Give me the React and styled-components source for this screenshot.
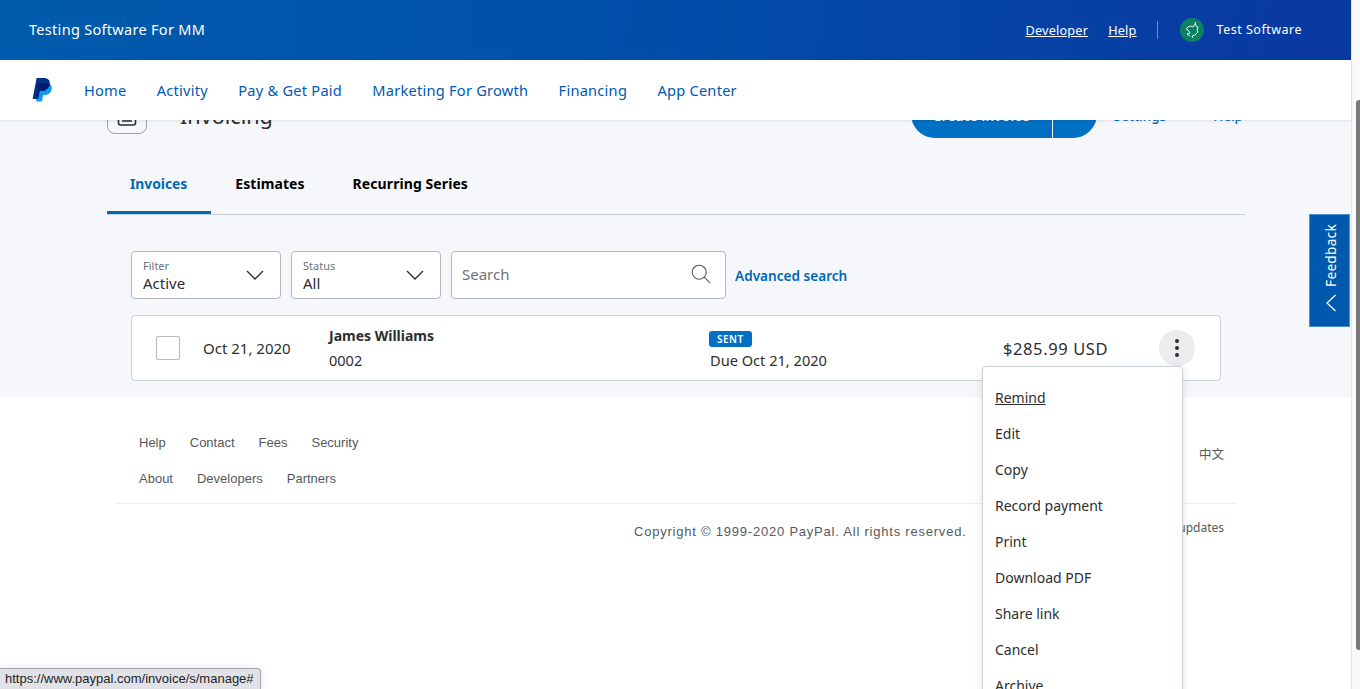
import React from 'react';
import styled, { createGlobalStyle } from 'styled-components';

const GlobalStyle = createGlobalStyle`
  html, body {
    margin: 0;
    padding: 0;
    height: 100%;
    overflow: hidden;
    background: #fff;
  }
  * {
    box-sizing: border-box;
  }
  a {
    text-decoration: none;
  }
`;

const NAV_LINKS = ['Home', 'Activity', 'Pay & Get Paid', 'Marketing For Growth', 'Financing', 'App Center'];
const TABS = ['Invoices', 'Estimates', 'Recurring Series'];
const MENU_ITEMS = ['Remind', 'Edit', 'Copy', 'Record payment', 'Print', 'Download PDF', 'Share link', 'Cancel', 'Archive'];
const FOOTER_ROWS = [
  ['Help', 'Contact', 'Fees', 'Security'],
  ['About', 'Developers', 'Partners'],
];

const Chevron = () => (
  <svg width="18" height="10" viewBox="0 0 18 10" fill="none" stroke="#2c2e2f" strokeWidth="1.3">
    <path d="M1 1l8 8 8-8" />
  </svg>
);

const PayPalLogo = () => (
  <svg width="20" height="24" viewBox="0 0 20 24">
    <path fill="#0a9cee" d="M6.4 5H14c3.6 0 6.4 2.2 5.7 6-.7 3.7-3.3 6-7 6h-1.6l-1.2 6.4H4.2z" />
    <path fill="#003087" d="M4.6 0h7.2c4.4 0 6.6 2.4 5.9 6.2-.8 4-3.8 6.6-7.8 6.6H7.6L6.1 21H.6z" />
    <path fill="#001f6b" d="M6.2 5.2H14c1.5 0 2.8.4 3.8 1-.9 4-3.9 6.6-7.9 6.6H7.6L6.5 19H5z" />
  </svg>
);

const LeafMark = () => (
  <svg width="14" height="18" viewBox="0 0 14 18" fill="none" stroke="#fff" strokeWidth="0.9" strokeLinejoin="round">
    <path d="M10 1l1 4 2 1-1 3 1 2-3 3-3 1 1 2" />
    <path d="M5 15l-3-2 3-1-2-3-2-1 2-2 3-1 2 1 2-3" />
  </svg>
);

export default function App() {
  return (
    <Screen>
      <GlobalStyle />
      <Page>
        <TopBar>
          <AccountName>Testing Software For MM</AccountName>
          <TopActions>
            <TopLink href="#">Developer</TopLink>
            <TopLink href="#">Help</TopLink>
            <TopDivider />
            <Avatar><LeafMark /></Avatar>
            <UserName>Test Software</UserName>
          </TopActions>
        </TopBar>

        <NavBar>
          <PayPalLogo />
          <NavLinks>
            {NAV_LINKS.map((link) => <NavLink key={link} href="#">{link}</NavLink>)}
          </NavLinks>
        </NavBar>

        <Main>
          <Hero>
            <HeroIcon>
              <svg width="20" height="24" viewBox="0 0 20 24" fill="none" stroke="#2c2e2f" strokeWidth="1.6">
                <rect x="1.5" y="1" width="17" height="22" rx="2" />
                <path d="M5 14h10M5 19h10" />
              </svg>
            </HeroIcon>
            <HeroTitle>Invoicing</HeroTitle>
            <HeroActions>
              <SplitButton>
                <CreateButton>Create invoice</CreateButton>
                <CaretButton />
              </SplitButton>
              <HeroLink href="#">Settings</HeroLink>
              <HeroLink href="#">Help</HeroLink>
            </HeroActions>
          </Hero>

          <Tabs>
            {TABS.map((tab, i) => <Tab key={tab} $active={i === 0}>{tab}</Tab>)}
          </Tabs>

          <Content>
            <Filters>
              <SelectBox>
                <SelectText>
                  <SelectLabel>Filter</SelectLabel>
                  <SelectValue>Active</SelectValue>
                </SelectText>
                <Chevron />
              </SelectBox>
              <SelectBox>
                <SelectText>
                  <SelectLabel>Status</SelectLabel>
                  <SelectValue>All</SelectValue>
                </SelectText>
                <Chevron />
              </SelectBox>
              <SearchBox>
                <SearchPlaceholder>Search</SearchPlaceholder>
                <svg width="20" height="20" viewBox="0 0 20 20" fill="none" stroke="#55595c" strokeWidth="1.1">
                  <circle cx="8.2" cy="8.2" r="7" />
                  <path d="M13.2 13.2l6 6" />
                </svg>
              </SearchBox>
              <AdvancedLink href="#">Advanced search</AdvancedLink>
            </Filters>

            <InvoiceCard>
              <Checkbox />
              <DateCell>Oct 21, 2020</DateCell>
              <Customer>
                <CustomerName>James Williams</CustomerName>
                <InvoiceNo>0002</InvoiceNo>
              </Customer>
              <StatusCell>
                <Badge>SENT</Badge>
                <DueDate>Due Oct 21, 2020</DueDate>
              </StatusCell>
              <Amount>$285.99 USD</Amount>
              <KebabCell>
                <KebabButton>
                  <Dot /><Dot /><Dot />
                </KebabButton>
                <Menu>
                  {MENU_ITEMS.map((item, i) => <MenuItem key={item} $hover={i === 0}>{item}</MenuItem>)}
                </Menu>
              </KebabCell>
            </InvoiceCard>
          </Content>
        </Main>

        <Footer>
          <FooterTop>
            <FooterLinks>
              {FOOTER_ROWS.map((row) => (
                <FooterRow key={row[0]}>
                  {row.map((link) => <FooterLink key={link} href="#">{link}</FooterLink>)}
                </FooterRow>
              ))}
            </FooterLinks>
            <Language>中文</Language>
          </FooterTop>
          <FooterLegal>
            <Copyright>Copyright © 1999-2020 PayPal. All rights reserved.</Copyright>
            <PolicyLink>Policy updates</PolicyLink>
          </FooterLegal>
        </Footer>

        <FeedbackTab>
          <FeedbackLabel>Feedback</FeedbackLabel>
          <svg width="10" height="18" viewBox="0 0 10 18" fill="none" stroke="#fff" strokeWidth="1.2">
            <path d="M9.5 1L1 9l8.5 8" />
          </svg>
        </FeedbackTab>

        <StatusTip>https://www.paypal.com/invoice/s/manage#</StatusTip>
      </Page>

      <ScrollTrack>
        <ScrollThumb />
      </ScrollTrack>
    </Screen>
  );
}

const Screen = styled.div`
  display: flex;
  width: 1360px;
  height: 689px;
  overflow: hidden;
  font-family: 'Noto Sans', 'Open Sans', sans-serif;
  color: #2c2e2f;
`;

const Page = styled.div`
  position: relative;
  width: 1351px;
  flex: none;
`;

const TopBar = styled.header`
  display: flex;
  align-items: center;
  justify-content: space-between;
  height: 60px;
  padding: 0 49px 0 29px;
  background: linear-gradient(95deg, #005bac 0%, #004fa9 45%, #0a38a1 100%);
  color: #fff;
`;

const AccountName = styled.div`
  margin-top: -2px;
  font-size: 14.5px;
  letter-spacing: 0.3px;
`;

const TopActions = styled.div`
  display: flex;
  align-items: center;
`;

const TopLink = styled.a`
  margin-right: 20px;
  font-size: 12.7px;
  color: #fff;
  text-decoration: underline;
  letter-spacing: 0.2px;
`;

const TopDivider = styled.span`
  width: 1px;
  height: 18px;
  margin: 0 22px 0 0;
  background: rgba(255, 255, 255, 0.4);
`;

const Avatar = styled.span`
  display: flex;
  align-items: center;
  justify-content: center;
  width: 24px;
  height: 24px;
  margin-right: 13px;
  border-radius: 50%;
  background: #0b8062;
`;

const UserName = styled.span`
  margin-top: -2px;
  font-size: 12.5px;
  letter-spacing: 0.5px;
`;

const NavBar = styled.nav`
  position: relative;
  z-index: 2;
  display: flex;
  align-items: center;
  gap: 32px;
  height: 60px;
  padding-left: 32px;
  background: #fff;
  box-shadow: 0 1px 3px rgba(0, 0, 0, 0.1);
`;

const NavLinks = styled.div`
  display: flex;
  gap: 30.3px;
`;

const NavLink = styled.a`
  font-size: 14.6px;
  letter-spacing: 0.24px;
  color: #0059b2;
`;

const Main = styled.main`
  display: flow-root;
  height: 277px;
  padding: 0 106px 0 107px;
  background: #f5f7fa;
`;

const Hero = styled.div`
  display: flex;
  align-items: center;
  height: 48px;
  margin-top: -30px;
`;

const HeroIcon = styled.div`
  display: flex;
  align-items: center;
  justify-content: center;
  width: 40px;
  height: 40px;
  border: 1px solid #9da3a6;
  border-radius: 8px;
`;

const HeroTitle = styled.h1`
  margin: 3px 0 0 33px;
  font-size: 21.6px;
  font-weight: 400;
`;

const HeroActions = styled.div`
  display: flex;
  align-items: center;
  margin-left: auto;
  margin-right: 2px;
`;

const SplitButton = styled.div`
  display: flex;
  height: 48px;
  margin-right: 17px;
  border-radius: 24px;
  overflow: hidden;
`;

const CreateButton = styled.button`
  width: 142px;
  padding-top: 3px;
  border: 0;
  border-right: 1px solid #fff;
  background: #0070c4;
  color: #fff;
  font: 600 14px 'Noto Sans', sans-serif;
`;

const CaretButton = styled.button`
  width: 44px;
  border: 0;
  background: #0070c4;
`;

const HeroLink = styled.a`
  margin: 3px 47px 0 0;
  font-size: 13.5px;
  font-weight: 500;
  color: #0070c4;

  &:last-child {
    margin-right: 0;
  }
`;

const Tabs = styled.div`
  display: flex;
  height: 61px;
  margin-top: 16px;
  border-bottom: 1px solid #c5d0d6;
`;

const Tab = styled.div`
  display: flex;
  align-items: center;
  height: 60px;
  padding: 2px 24px 0 ${(p) => (p.$active ? '23px' : '24px')};
  border-bottom: 3px solid ${(p) => (p.$active ? '#0068b8' : 'transparent')};
  font-size: ${(p) => (p.$active ? '13.8px' : '14px')};
  font-weight: 700;
  letter-spacing: ${(p) => (p.$active ? '0' : '0.08px')};
  color: ${(p) => (p.$active ? '#0068b8' : '#000')};
`;

const Content = styled.div`
  padding: 36px 24px 0;
`;

const Filters = styled.div`
  display: flex;
  align-items: center;
  gap: 10px;
  height: 48px;
`;

const SelectBox = styled.div`
  display: flex;
  align-items: center;
  justify-content: space-between;
  width: 150px;
  height: 48px;
  padding: 0 16px 0 11px;
  background: #fff;
  border: 1px solid #b4b8bb;
  border-radius: 4px;
`;

const SelectText = styled.div`
  display: flex;
  flex-direction: column;
`;

const SelectLabel = styled.span`
  font-size: 11px;
  line-height: 15px;
  color: #6c7378;
`;

const SelectValue = styled.span`
  margin-top: 1px;
  font-size: 15px;
  line-height: 19px;
`;

const SearchBox = styled.div`
  display: flex;
  align-items: center;
  justify-content: space-between;
  width: 275px;
  height: 48px;
  padding: 0 14px 2px 10px;
  background: #fff;
  border: 1px solid #b4b8bb;
  border-radius: 4px;
`;

const SearchPlaceholder = styled.span`
  font-size: 15px;
  color: #6c7378;
`;

const AdvancedLink = styled.a`
  margin-left: -1px;
  font-size: 13.6px;
  font-weight: 600;
  color: #0068b8;
`;

const InvoiceCard = styled.div`
  display: grid;
  grid-template-columns: 47px 126px 380px 294px 156px 36px;
  align-items: center;
  height: 66px;
  margin-top: 16px;
  padding-left: 24px;
  background: #fff;
  border: 1px solid #cbd2d6;
  border-radius: 4px;
`;

const Checkbox = styled.span`
  width: 24px;
  height: 24px;
  background: #fff;
  border: 1px solid #b4b8bb;
  border-radius: 2px;
`;

const DateCell = styled.span`
  font-size: 15px;
`;

const Customer = styled.div`
  display: flex;
  flex-direction: column;
  gap: 6px;
`;

const CustomerName = styled.span`
  font-size: 14px;
  line-height: 19px;
  font-weight: 700;
`;

const InvoiceNo = styled.span`
  font-size: 14.5px;
  line-height: 19px;
`;

const StatusCell = styled.div`
  display: flex;
  flex-direction: column;
  align-items: flex-start;
  gap: 3px;
  padding-top: 5px;
`;

const Badge = styled.span`
  padding: 0 8px;
  height: 16px;
  line-height: 16px;
  background: #0070c4;
  border-radius: 3px;
  color: #fff;
  font-size: 10px;
  font-weight: 600;
  letter-spacing: 0.5px;
`;

const DueDate = styled.span`
  padding-left: 1px;
  font-size: 14.6px;
  line-height: 20px;
`;

const Amount = styled.span`
  font-size: 16.5px;
  letter-spacing: 0.6px;
`;

const KebabCell = styled.div`
  position: relative;
  height: 36px;
`;

const KebabButton = styled.div`
  display: flex;
  flex-direction: column;
  align-items: center;
  justify-content: center;
  gap: 3px;
  width: 36px;
  height: 36px;
  border-radius: 50%;
  background: #eaeced;
`;

const Dot = styled.span`
  width: 4px;
  height: 4px;
  border-radius: 50%;
  background: #2c2e2f;
`;

const Menu = styled.ul`
  position: absolute;
  top: 36px;
  right: 12px;
  z-index: 3;
  width: 201px;
  margin: 0;
  padding: 13px 0 0;
  list-style: none;
  background: #fff;
  border: 1px solid #cbd2d6;
  border-radius: 4px;
  box-shadow: 0 2px 8px rgba(0, 0, 0, 0.12);
`;

const MenuItem = styled.li`
  height: 36px;
  padding-left: 12px;
  line-height: 36px;
  font-size: 14px;
  text-decoration: ${(p) => (p.$hover ? 'underline' : 'none')};
`;

const Footer = styled.footer`
  margin: 0 114px 0 115px;
  padding-top: 28px;
  font-family: 'Liberation Sans', Arial, sans-serif;
  font-size: 13px;
  color: #55595c;
`;

const FooterTop = styled.div`
  display: flex;
  justify-content: space-between;
  align-items: center;
  height: 79px;
  padding: 0 13px 0 24px;
  border-bottom: 1px solid #eceeef;
`;

const FooterLinks = styled.div`
  display: flex;
  flex-direction: column;
  margin-bottom: 7px;
`;

const FooterRow = styled.div`
  display: flex;
  gap: 24px;
  height: 36px;
  align-items: center;
`;

const FooterLink = styled.a`
  color: #55595c;
`;

const Language = styled.span`
  margin-bottom: 22px;
  font-family: 'Noto Sans CJK SC', sans-serif;
  font-size: 12.5px;
`;

const FooterLegal = styled.div`
  display: flex;
  justify-content: space-between;
  padding: 15px 13px 0 519px;
`;

const Copyright = styled.span`
  margin-top: 5px;
  letter-spacing: 0.78px;
  font-size: 13px;
`;

const PolicyLink = styled.span`
  font-family: 'Noto Sans', sans-serif;
  font-size: 12px;
`;

const FeedbackTab = styled.aside`
  position: absolute;
  top: 214px;
  right: 1px;
  display: flex;
  flex-direction: column;
  align-items: center;
  gap: 7px;
  width: 41px;
  height: 113px;
  padding: 9px 0 0 3px;
  background: #0059ad;
  border: 1px solid #4a8fd0;
  color: #fff;
`;

const FeedbackLabel = styled.span`
  margin-right: 2px;
  writing-mode: vertical-rl;
  transform: rotate(180deg);
  font-size: 13.6px;
  letter-spacing: 0.3px;
`;

const StatusTip = styled.div`
  position: absolute;
  left: 0;
  bottom: 0;
  width: 261px;
  height: 21px;
  padding-left: 5px;
  background: #e0e2e8;
  border: 1px solid #a4a6ab;
  border-width: 1px 1px 0 0;
  border-top-right-radius: 4px;
  box-shadow: 0 0 6px rgba(0, 0, 0, 0.12);
  font-family: 'Liberation Sans', Arial, sans-serif;
  font-size: 13px;
  line-height: 19px;
  color: #222;
  white-space: nowrap;
`;

const ScrollTrack = styled.div`
  flex: 1;
  padding: 100px 0 0 4px;
  background: #fafafa;
  border-left: 1px solid #e6e6e6;
`;

const ScrollThumb = styled.div`
  width: 5px;
  height: 550px;
  background: #7a7a7a;
  border-radius: 3px 0 0 3px;
`;
